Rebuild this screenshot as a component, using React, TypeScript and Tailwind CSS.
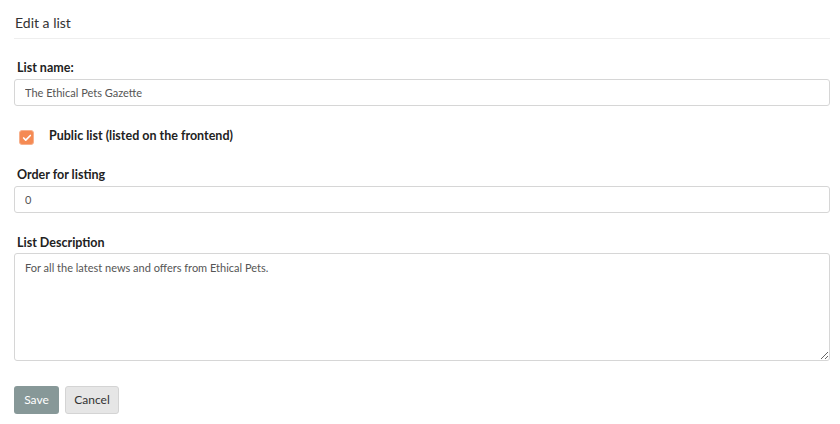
import { Check } from "lucide-react";

const FONT = { fontFamily: "Lato, 'Noto Sans', sans-serif" };

export default function App() {
  return (
    <div className="h-[424px] w-[840px] bg-white text-[#333]" style={FONT}>
      <div className="pl-[14px] pr-[10px] pt-[14px]">
        <h1 className="border-b border-[#eeeeee] pb-[6px] pl-[1px] text-[14px] leading-[18px] text-[#333]">Edit a list</h1>

        <form className="flex flex-col pt-[21px]">
          <label className="pl-[3px] text-[12.5px] font-bold leading-[16px] text-[#222]">List name:</label>
          <input
            className="mt-[3px] h-[27px] w-full rounded-[3px] border border-[#d6d6d6] px-[10px] text-[11px] text-[#555] outline-none"
            defaultValue="The Ethical Pets Gazette"
            style={FONT}
          />

          <div className="mt-[24px] flex items-center">
            <span className="ml-[5px] flex h-[15px] w-[15px] items-center justify-center rounded-[3px] border border-[#f7b08c] bg-[#f58a53]">
              <Check className="h-[10px] w-[10px] text-white" strokeWidth={4} />
            </span>
            <span className="ml-[15px] -mt-[4px] text-[12.5px] font-bold leading-[16px] text-[#222]">Public list (listed on the frontend)</span>
          </div>

          <label className="mt-[22px] pl-[3px] text-[12.5px] font-bold leading-[16px] text-[#222]">Order for listing</label>
          <input
            className="mt-[3px] h-[27px] w-full rounded-[3px] border border-[#d6d6d6] px-[10px] text-[11px] text-[#555] outline-none"
            defaultValue="0"
            style={FONT}
          />

          <label className="mt-[22px] pl-[3px] text-[12.5px] font-bold leading-[16px] text-[#222]">List Description</label>
          <textarea
            className="mt-[2px] block h-[108px] w-full rounded-[3px] border border-[#d6d6d6] px-[10px] py-[6px] text-[11px] leading-[16px] text-[#555] outline-none"
            defaultValue="For all the latest news and offers from Ethical Pets."
            style={FONT}
          />

          <div className="mt-[25px] flex gap-[6px]">
            <button type="button" className="h-[28px] w-[45px] rounded-[3px] bg-[#879898] text-[12px] text-white" style={FONT}>Save</button>
            <button type="button" className="h-[28px] w-[54px] rounded-[3px] border border-[#d4d4d4] bg-[#e6e6e6] text-[12px] text-[#333]" style={FONT}>Cancel</button>
          </div>
        </form>
      </div>
    </div>
  );
}
